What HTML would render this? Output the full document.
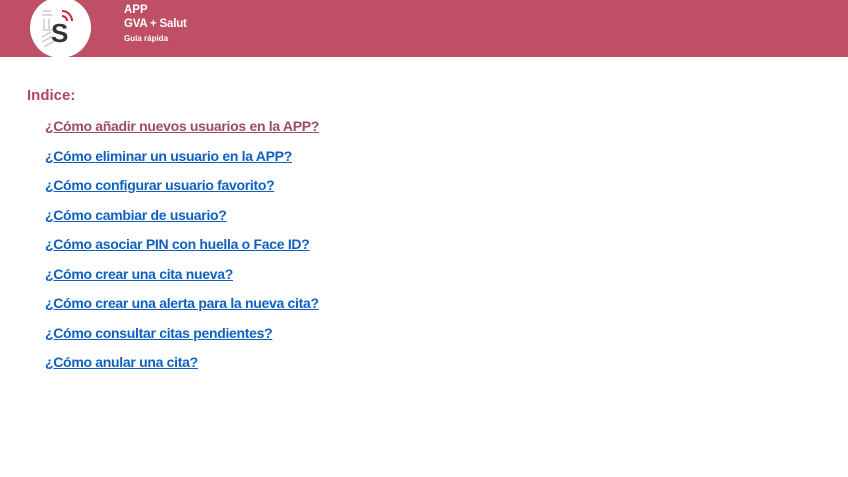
<!DOCTYPE html>
<html><head><meta charset="utf-8"><style>
body{margin:0;width:848px;height:477px;background:#fff;font-family:"Liberation Sans",sans-serif;overflow:hidden;position:relative}
.hdr{position:absolute;left:0;top:0;width:848px;height:57px;background:#be4f64}
.circ{position:absolute;left:30px;top:-3px;width:61px;height:61px;border-radius:50%;background:#fff}
.t{position:absolute;color:#fff;font-weight:bold}
.idx{position:absolute;left:27px;top:87px;color:#b0466a;font-weight:bold;font-size:15px}
a{position:absolute;left:45px;font-weight:bold;font-size:14px;color:#1060c0;text-decoration:underline;letter-spacing:-0.3px;white-space:nowrap}
</style></head><body>
<div class="hdr"></div>
<div class="circ">
<svg width="61" height="61" viewBox="0 0 61 61">
<g stroke="#ccc" stroke-width="1.5" fill="none">
<path d="M13 14h8M12 18h10M14 22v10M19 22v10M12 33h10M12 40l9-5M12 45l11-6M14 50l10-6"/>
</g>
<text x="21" y="45" font-family="Liberation Sans" font-weight="bold" font-size="26" fill="#333">S</text>
<g stroke="#d0203a" stroke-width="2" fill="none">
<path d="M32 19a5 5 0 0 1 5 5M32 14a10 10 0 0 1 10 10"/>
</g>
</svg>
</div>
<div class="t" style="left:124px;top:4px;font-size:11.5px">APP</div>
<div class="t" style="left:124px;top:18px;font-size:11.5px;letter-spacing:-0.2px">GVA + Salut</div>
<div class="t" style="left:124px;top:34px;font-size:8px">Guía rápida</div>
<div class="idx">Indice:</div>
<a style="top:118px;color:#9c4a6e">¿Cómo añadir nuevos usuarios en la APP?</a>
<a style="top:148px">¿Cómo eliminar un usuario en la APP?</a>
<a style="top:177px">¿Cómo configurar usuario favorito?</a>
<a style="top:207px">¿Cómo cambiar de usuario?</a>
<a style="top:236px">¿Cómo asociar PIN con huella o Face ID?</a>
<a style="top:266px">¿Cómo crear una cita nueva?</a>
<a style="top:295px">¿Cómo crear una alerta para la nueva cita?</a>
<a style="top:325px">¿Cómo consultar citas pendientes?</a>
<a style="top:354px">¿Cómo anular una cita?</a>
</body></html>
